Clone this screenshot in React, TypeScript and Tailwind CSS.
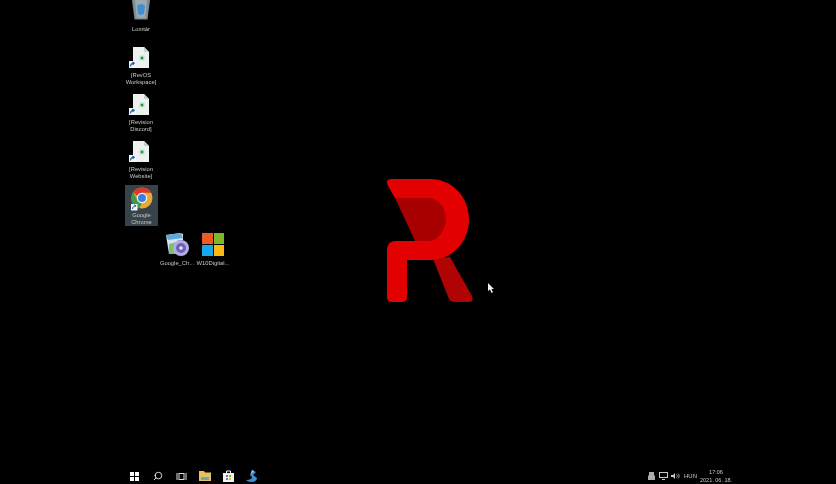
import type { ReactNode } from 'react';
import { Search } from 'lucide-react';

function Shortcut() {
  return (
    <g>
      <rect x="0" y="15" width="7" height="7" fill="#f4f6f8" />
      <path d="M1.500 20.500c0-2 1-3 3-3.200M3.300 16l2 1.200-1.600 1.600" stroke="#1f5fae" strokeWidth="1.100" fill="none" />
    </g>
  );
}

function FileIcon() {
  return (
    <svg width="24" height="23" viewBox="0 0 24 23">
      {/* page */}
      <path d="M4 1h11l5 5v16H4z" fill="#eef2ef" />
      <path d="M15 1v5h5z" fill="#c9cfcb" />
      <rect x="10.500" y="9.500" width="5" height="5" fill="#bfe3cb" />
      <rect x="11.800" y="10.800" width="2.400" height="2.400" fill="#1f8f4e" />
      <Shortcut />
    </svg>
  );
}

function RecycleBin() {
  return (
    <svg width="20" height="20" viewBox="0 0 20 20">
      <path d="M1 0h18l-2.500 19.500h-13z" fill="#7f8c95" />
      <path d="M4 0h12l-1.600 18H5.600z" fill="#9aa8b0" />
      <path d="M6 6c1.500-2.500 6.500-2.500 8 0l-1.200 8c-1.300 1-4.300 1-5.600 0z" fill="#3f8fd0" />
    </svg>
  );
}

function ChromeIcon() {
  return (
    <svg width="24" height="24" viewBox="0 0 48 48">
      <circle cx="24" cy="22" r="21" fill="#e8a92f" />
      <path d="M24 1a21 21 0 0 1 18.200 10.500H24a10.500 10.500 0 0 0-9.500 6L6 10.500A21 21 0 0 1 24 1z" fill="#d8392f" />
      <path d="M6 10.500l9 15.500a10.500 10.500 0 0 0 9 6.500L18 43A21 21 0 0 1 6 10.500z" fill="#3d9a4b" />
      <circle cx="24" cy="22" r="10.500" fill="#f2f2f2" />
      <circle cx="24" cy="22" r="8" fill="#3d7fe0" />
      <rect x="2" y="34" width="13" height="13" fill="#f4f6f8" />
      <path d="M5 44c0-4 2-6 6-6.400M8.500 35.500l3.500 2-3 3" stroke="#1f5fae" strokeWidth="2" fill="none" />
    </svg>
  );
}

function InstallerIcon() {
  return (
    <svg width="24" height="25" viewBox="0 0 24 25">
      <path d="M1 3l14-2 3 1v6l-6 1v13H4z" fill="#d5e4ee" />
      <path d="M1 3l15-2 2 5-15 2z" fill="#5fa9d8" />
      <path d="M4 12l8-2v12H4z" fill="#7fbf6a" />
      <circle cx="16" cy="16" r="8" fill="#b3ace6" />
      <circle cx="16" cy="16" r="5" fill="#6b62b8" />
      <circle cx="16" cy="16" r="1.800" fill="#e8e8f5" />
    </svg>
  );
}

function MsTile() {
  return (
    <div className="grid h-[23px] w-[22px] grid-cols-2 grid-rows-2 gap-px">
      <div className="bg-[#ef5a24]" />
      <div className="bg-[#7cb82a]" />
      <div className="bg-[#1aa6ee]" />
      <div className="bg-[#fdb913]" />
    </div>
  );
}

interface DesktopIconProps {
  pos: string;
  lines: string[];
  children: ReactNode;
}

function DesktopIcon({ pos, lines, children }: DesktopIconProps) {
  return (
    <div className={`absolute flex w-[40px] flex-col items-center ${pos}`}>
      {children}
      <div className="mt-[3px] whitespace-nowrap text-center text-[5.800px] leading-[7px] text-[#c8c8c8]">
        {lines.map((l) => (
          <div key={l}>{l}</div>
        ))}
      </div>
    </div>
  );
}

function TaskbarIcon({ children }: { children: ReactNode }) {
  return <div className="flex h-5 w-[23.500px] items-center justify-center">{children}</div>;
}

export default function App() {
  return (
    <div className="relative flex h-[484px] w-[836px] flex-col overflow-hidden bg-black font-['Liberation_Sans',sans-serif]">
      {/* Desktop */}
      <div className="relative flex-1">
        <div className="blur-[0.6px]">
          <DesktopIcon pos="left-[121px] top-0" lines={['Lomtár']}>
            <RecycleBin />
            <div className="h-[3px]" />
          </DesktopIcon>
          <DesktopIcon pos="left-[121px] top-[46px]" lines={['[RevOS', 'Workspace]']}>
            <FileIcon />
          </DesktopIcon>
          <DesktopIcon pos="left-[121px] top-[93px]" lines={['[Revision', 'Discord]']}>
            <FileIcon />
          </DesktopIcon>
          <DesktopIcon pos="left-[121px] top-[140px]" lines={['[Revision', 'Website]']}>
            <FileIcon />
          </DesktopIcon>
          <div className="absolute left-[125px] top-[185px] flex h-[41px] w-[33px] flex-col items-center bg-[#37424a] pt-[2px]">
            <ChromeIcon />
            <div className="mt-[1px] whitespace-nowrap text-center text-[5.800px] leading-[7px] text-[#c8c8c8]">
              <div>Google</div>
              <div>Chrome</div>
            </div>
          </div>
          <DesktopIcon pos="left-[157px] top-[232px]" lines={['Google_Ch...']}>
            <InstallerIcon />
          </DesktopIcon>
          <DesktopIcon pos="left-[193px] top-[233px]" lines={['W10Digital...']}>
            <MsTile />
            <div className="h-px" />
          </DesktopIcon>
        </div>

        {/* Wallpaper logo */}
        <svg className="absolute left-[380px] top-[172px] blur-[0.6px]" width="100" height="136" viewBox="380 172 100 136">
          <path d="M395 198H430C440 198 447 207 447 219C447 230 440 241 428 241H415Z" fill="#a80000" />
          <path d="M433 259L450 257L472 296Q474 302 469 302H454Q451 302 449 299Z" fill="#b00303" />
          <path
            d="M391 179H430C452 179 469 197 469 219C469 242 452 260 430 260H407V297Q407 302 402 302H392Q387 302 387 297V250Q387 241 396 241H428C439 241 446 229 446 219C446 207 438 198 428 198H395L388 186Q385 179 391 179Z"
            fill="#e30000"
          />
        </svg>

        {/* Cursor */}
        <svg className="absolute left-[488px] top-[283px]" width="6" height="10" viewBox="0 0 6 10">
          <path d="M0 0v8l2-1.500L3.500 10 5 9.300 3.500 6H6z" fill="#eeeeee" />
        </svg>
      </div>

      {/* Taskbar */}
      <div className="mb-[-2px] flex h-[20px] items-center pl-[123px] pr-[104px] blur-[0.6px]">
        <TaskbarIcon>
          <div className="grid h-[9px] w-[9px] grid-cols-2 gap-px">
            <div className="bg-white" />
            <div className="bg-white" />
            <div className="bg-white" />
            <div className="bg-white" />
          </div>
        </TaskbarIcon>
        <TaskbarIcon>
          <Search size={10} className="-scale-x-100 text-white" strokeWidth={2} />
        </TaskbarIcon>
        <TaskbarIcon>
          <svg width="11" height="9" viewBox="0 0 11 9">
            <rect x="3" y="1.500" width="5" height="6" fill="none" stroke="#ddd" />
            <path d="M1 1v7M10 1v7" stroke="#ddd" />
          </svg>
        </TaskbarIcon>
        <TaskbarIcon>
          <svg width="12" height="10" viewBox="0 0 12 10">
            <path d="M0 0h5l1 1.500h6V10H0z" fill="#e8c25a" />
            <rect x="2" y="6" width="8" height="3" fill="#6fa6b8" />
          </svg>
        </TaskbarIcon>
        <TaskbarIcon>
          <svg width="11" height="12" viewBox="0 0 11 12">
            <path d="M0 3h11v9H0z" fill="#f2f2f2" />
            <path d="M3.500 3V1h4v2" stroke="#f2f2f2" fill="none" />
            <rect x="3" y="5" width="2" height="2" fill="#e8552a" />
            <rect x="6" y="5" width="2" height="2" fill="#7cb82a" />
            <rect x="3" y="8" width="2" height="2" fill="#1aa6ee" />
            <rect x="6" y="8" width="2" height="2" fill="#fdb913" />
          </svg>
        </TaskbarIcon>
        <TaskbarIcon>
          <svg width="14" height="12" viewBox="0 0 14 12" className="ml-[1px]">
            <path d="M6 0l4 2-3 3 4 3c0 2-2 4-5 4-3 0-5-1-6-2 4 0 6-1 6-3L4 5z" fill="#3f8fd0" />
            <path d="M6 0l2 1-3 3z" fill="#9fd0f0" />
          </svg>
        </TaskbarIcon>

        <div className="ml-auto flex items-center text-[#c8c8c8]">
          <svg width="7" height="8" viewBox="0 0 7 8" className="mr-[4px]">
            <path d="M1 0h5v3l1 1v4H0V4l1-1z" fill="#a8adb0" />
          </svg>
          <svg width="9" height="8" viewBox="0 0 9 8" className="mr-[3px]">
            <rect x="0.500" y="0.500" width="8" height="5" fill="none" stroke="#c8c8c8" />
            <path d="M3 7.500h3" stroke="#c8c8c8" />
          </svg>
          <svg width="9" height="8" viewBox="0 0 9 8" className="mr-[4px]">
            <path d="M0 3h2l2-2v6L2 5H0z" fill="#c8c8c8" />
            <path d="M5.500 2.500c1 1 1 2 0 3M7 1.500c1.500 1.500 1.500 3.500 0 5" stroke="#c8c8c8" fill="none" strokeWidth="0.800" />
          </svg>
          <span className="mr-[3px] text-[6px] leading-none">HUN</span>
          <div className="w-[32px] whitespace-nowrap text-center text-[5.500px] leading-[8.500px]">
            <div>17:06</div>
            <div>2021. 06. 18.</div>
          </div>
        </div>
      </div>
    </div>
  );
}
